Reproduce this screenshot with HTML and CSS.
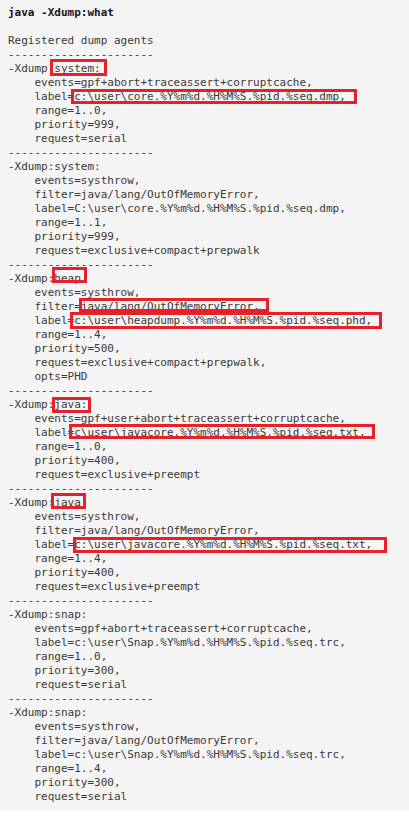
FILE: index.html
```html
<!DOCTYPE html>
<html>
<head>
<meta charset="utf-8">
<link rel="stylesheet" href="styles.css">
</head>
<body>
<div class="codeblock">
<pre class="code"><span class="cmd">java -Xdump:what</span>

Registered dump agents
----------------------
-Xdump:system:
    events=gpf+abort+traceassert+corruptcache,
    label=c:\user\core.%Y%m%d.%H%M%S.%pid.%seq.dmp,
    range=1..0,
    priority=999,
    request=serial
----------------------
-Xdump:system:
    events=systhrow,
    filter=java/lang/OutOfMemoryError,
    label=C:\user\core.%Y%m%d.%H%M%S.%pid.%seq.dmp,
    range=1..1,
    priority=999,
    request=exclusive+compact+prepwalk
----------------------
-Xdump:heap
    events=systhrow,
    filter=java/lang/OutOfMemoryError,
    label=c:\user\heapdump.%Y%m%d.%H%M%S.%pid.%seq.phd,
    range=1..4,
    priority=500,
    request=exclusive+compact+prepwalk,
    opts=PHD
----------------------
-Xdump:java:
    events=gpf+user+abort+traceassert+corruptcache,
    label=c\user\javacore.%Y%m%d.%H%M%S.%pid.%seq.txt,
    range=1..0,
    priority=400,
    request=exclusive+preempt
----------------------
-Xdump:java
    events=systhrow,
    filter=java/lang/OutOfMemoryError,
    label=c:\user\javacore.%Y%m%d.%H%M%S.%pid.%seq.txt,
    range=1..4,
    priority=400,
    request=exclusive+preempt
----------------------
-Xdump:snap:
    events=gpf+abort+traceassert+corruptcache,
    label=c:\user\Snap.%Y%m%d.%H%M%S.%pid.%seq.trc,
    range=1..0,
    priority=300,
    request=serial
----------------------
-Xdump:snap:
    events=systhrow,
    filter=java/lang/OutOfMemoryError,
    label=c:\user\Snap.%Y%m%d.%H%M%S.%pid.%seq.trc,
    range=1..4,
    priority=300,
    request=serial</pre>
<div class="mark m1"></div>
<div class="mark m2"></div>
<div class="mark m3"></div>
<div class="mark m4"></div>
<div class="mark m5"></div>
<div class="mark m6"></div>
<div class="mark m7"></div>
<div class="mark m8"></div>
<div class="mark m9"></div>
</div>
</body>
</html>
```
FILE: styles.css
```css
html, body {
  margin: 0;
  padding: 0;
  background: #ffffff;
}

.codeblock {
  position: relative;
  width: 409px;
  background: #f4f4f4;
  padding: 6px 8px 6px;
  box-sizing: border-box;
}

.code {
  margin: 0;
  font-family: "DejaVu Sans Mono", "Liberation Mono", monospace;
  font-size: 11px;
  line-height: 14px;
  color: #3a3a3a;
  white-space: pre;
}

.cmd {
  font-weight: 600;
  color: #161616;
}

.mark {
  position: absolute;
  border: 3px solid #e8202a;
  box-sizing: border-box;
  pointer-events: none;
}

.m1 { left: 50px; top: 59px; width: 57px; height: 17px; }
.m2 { left: 71px; top: 89px; width: 286px; height: 15px; }
.m3 { left: 52px; top: 267px; width: 35px; height: 16px; }
.m4 { left: 79px; top: 298px; width: 190px; height: 14px; }
.m5 { left: 70px; top: 312px; width: 312px; height: 17px; }
.m6 { left: 52px; top: 397px; width: 39px; height: 16px; }
.m7 { left: 69px; top: 424px; width: 306px; height: 15px; }
.m8 { left: 51px; top: 493px; width: 35px; height: 16px; }
.m9 { left: 73px; top: 537px; width: 314px; height: 16px; }
```
